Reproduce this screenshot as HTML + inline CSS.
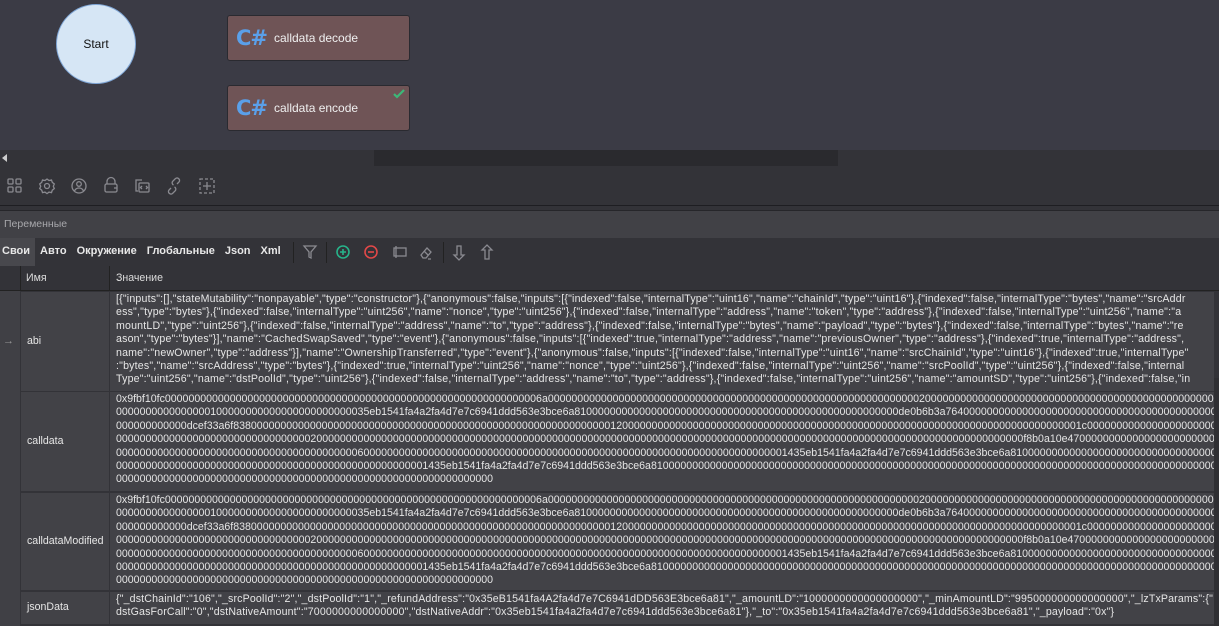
<!DOCTYPE html>
<html><head><meta charset="utf-8"><style>
*{margin:0;padding:0;box-sizing:border-box}
body{width:1219px;height:626px;overflow:hidden;background:#333338;font-family:"Liberation Sans","DejaVu Sans",sans-serif;color:#e0e0e0;position:relative}
.abs{position:absolute}
.canvas{left:0;top:0;width:1219px;height:150px;background:#3b3b45}
.start{left:56px;top:4px;width:80px;height:80px;border-radius:50%;background:#d6e6f5;border:1px solid #7fa6d6;color:#111;font-size:12px;display:flex;align-items:center;justify-content:center}
.node{left:227px;width:183px;height:46px;background:#6f5456;border:1px solid #2a2a30;border-radius:3px;display:flex;align-items:center}
.node b{color:#5aa0ea;font-size:21px;margin-left:8px;width:38px;font-family:"DejaVu Sans",sans-serif;letter-spacing:-1px}
.node span{color:#f0f0f0;font-size:12px;margin-left:0}
.hs{left:0;top:150px;width:1219px;height:16px;background:#333338}
.thumb{left:374px;top:150px;width:464px;height:16px;background:#2a2a2e}
.line{height:1px;background:#1e1e22;left:0;width:1219px}
.var{left:0;top:211px;width:1219px;height:27px;background:#414146;color:#a8a8ac;font-size:10.5px;padding:7px 4px}
.tabs{left:0;top:238px;height:28px;font-size:11px;font-weight:bold;color:#e8e8e8;display:flex}
.tabs div{padding:7px 5px 0 5px;height:28px}
.grid{left:0;top:266px;width:1219px;height:360px;background:#333338}
.hdr{font-size:10.6px;color:#ddd}
.ind{left:0;top:291px;width:20px;height:335px;background:#404045}
.cell{background:#424247;font-size:10.6px;line-height:13.4px;color:#e6e6e6}
.val{overflow:hidden;white-space:nowrap;padding:1px 0 0 6px}
.ls{letter-spacing:0.19px}
.nm{display:flex;align-items:center;padding-left:6px}
svg{position:absolute}
</style></head><body>
<div class="abs canvas"></div>
<div class="abs start">Start</div>
<div class="abs node" style="top:15px"><b>C#</b><span>calldata decode</span></div>
<div class="abs node" style="top:85px"><b>C#</b><span>calldata encode</span><svg style="right:4px;top:3px" width="12" height="10" viewBox="0 0 12 10"><path d="M1 5l3 3 7-7" stroke="#3cb878" stroke-width="2.2" fill="none"/></svg></div>
<div class="abs hs"></div><div class="abs thumb"></div>
<svg style="left:2px;top:154px" width="6" height="8"><path d="M5 0L0 4 5 8z" fill="#ccc"/></svg>
<svg style="left:0;top:166px" width="230" height="40" fill="none" stroke="#8a8a90" stroke-width="1.3">
<rect x="8" y="13" width="5" height="5" rx="1"/><rect x="16" y="13" width="5" height="5" rx="1"/><rect x="8" y="21" width="5" height="5" rx="1"/><rect x="16" y="21" width="5" height="5" rx="1"/>
<circle cx="47" cy="20" r="2.5"/><path d="M47 13l2 1.5 2.5-.5 .8 2.4 2 1.6-1 2.3 1 2.3-2 1.6-.8 2.4-2.5-.5-2 1.5-2-1.5-2.5.5-.8-2.4-2-1.6 1-2.3-1-2.3 2-1.6.8-2.4 2.5.5z"/>
<circle cx="79" cy="20" r="7"/><circle cx="79" cy="18" r="2.3"/><path d="M74.5 25c1-2.5 2.5-3 4.5-3s3.5.5 4.5 3"/>
<path d="M107 18v-2.5a4 4 0 0 1 8 0V18"/><rect x="105" y="18" width="12" height="8" rx="1.5"/><path d="M114 22h3"/>
<path d="M138 25h-2v-11h6"/><rect x="139" y="17" width="10" height="9" rx="1"/><path d="M142 20l-1.5 1.5 1.5 1.5M146 20l1.5 1.5-1.5 1.5"/>
<path d="M171 22l-2 2a2.5 2.5 0 0 0 3.5 3.5l3-3a2.5 2.5 0 0 0-1-3.5M177 18l2-2a2.5 2.5 0 0 0-3.5-3.5l-3 3a2.5 2.5 0 0 0 1 3.5"/>
<rect x="200" y="13" width="14" height="14" stroke-dasharray="3 2"/><path d="M207 16v8M203 20h8"/>
</svg>
<div class="abs line" style="top:205px"></div>
<div class="abs line" style="top:210px;background:#26262a"></div>
<div class="abs var">Переменные</div>
<div class="abs tabs"><div style="background:#48484d;padding-left:2px">Свои</div><div>Авто</div><div>Окружение</div><div>Глобальные</div><div>Json</div><div>Xml</div></div>
<div class="abs" style="left:293px;top:242px;width:1px;height:21px;background:#222"></div>
<div class="abs" style="left:326px;top:242px;width:1px;height:21px;background:#222"></div>
<div class="abs" style="left:443px;top:242px;width:1px;height:21px;background:#222"></div>
<svg style="left:300px;top:238px" width="210" height="28" fill="none" stroke-width="1.3">
<path d="M4 8h12l-5 6v6l-2-1v-5z" stroke="#8a8a90"/>
<circle cx="43" cy="14" r="6" stroke="#27b38a" stroke-width="1.6"/><path d="M40 14h6M43 11v6" stroke="#27b38a" stroke-width="1.6"/>
<circle cx="71" cy="14" r="6" stroke="#e24848" stroke-width="1.6"/><path d="M68 14h6" stroke="#e24848" stroke-width="1.6"/>
<rect x="94" y="10" width="12" height="8" stroke="#8a8a90"/><path d="M96 8v12" stroke="#8a8a90"/>
<path d="M121 17l6-7 4 4-5 6h-3zM124 13l4 4M128 21h3" stroke="#8a8a90"/>
<path d="M157 8v9h-3l5 5 5-5h-3V8z" stroke="#8a8a90"/>
<path d="M185 21v-9h-3l5-5 5 5h-3v9z" stroke="#8a8a90"/>
</svg>
<div class="abs grid"></div>
<div class="abs" style="left:0;top:266px;width:1219px;height:25px;border-bottom:1px solid #222"></div>
<div class="abs" style="left:20px;top:266px;width:1px;height:25px;background:#222"></div>
<div class="abs" style="left:109px;top:266px;width:1px;height:25px;background:#222"></div>
<div class="abs hdr" style="left:26px;top:272px">Имя</div>
<div class="abs hdr" style="left:116px;top:272px">Значение</div>
<div class="abs ind"></div>
<div class="abs" style="left:3px;top:335px;color:#999;font-size:11px">→</div>

<div class="abs cell nm" style="left:21px;top:292px;width:88px;height:99px">abi</div>
<div class="abs cell val ls" style="left:110px;top:292px;width:1104px;height:99px">
<div>[{"inputs":[],"stateMutability":"nonpayable","type":"constructor"},{"anonymous":false,"inputs":[{"indexed":false,"internalType":"uint16","name":"chainId","type":"uint16"},{"indexed":false,"internalType":"bytes","name":"srcAddr</div>
<div>ess","type":"bytes"},{"indexed":false,"internalType":"uint256","name":"nonce","type":"uint256"},{"indexed":false,"internalType":"address","name":"token","type":"address"},{"indexed":false,"internalType":"uint256","name":"a</div>
<div>mountLD","type":"uint256"},{"indexed":false,"internalType":"address","name":"to","type":"address"},{"indexed":false,"internalType":"bytes","name":"payload","type":"bytes"},{"indexed":false,"internalType":"bytes","name":"re</div>
<div>ason","type":"bytes"}],"name":"CachedSwapSaved","type":"event"},{"anonymous":false,"inputs":[{"indexed":true,"internalType":"address","name":"previousOwner","type":"address"},{"indexed":true,"internalType":"address",</div>
<div>name":"newOwner","type":"address"}],"name":"OwnershipTransferred","type":"event"},{"anonymous":false,"inputs":[{"indexed":false,"internalType":"uint16","name":"srcChainId","type":"uint16"},{"indexed":true,"internalType"</div>
<div>:"bytes","name":"srcAddress","type":"bytes"},{"indexed":true,"internalType":"uint256","name":"nonce","type":"uint256"},{"indexed":false,"internalType":"uint256","name":"srcPoolId","type":"uint256"},{"indexed":false,"internal</div>
<div>Type":"uint256","name":"dstPoolId","type":"uint256"},{"indexed":false,"internalType":"address","name":"to","type":"address"},{"indexed":false,"internalType":"uint256","name":"amountSD","type":"uint256"},{"indexed":false,"in</div>
</div>

<div class="abs cell nm" style="left:21px;top:392px;width:88px;height:99px">calldata</div>
<div class="abs cell val" style="left:110px;top:392px;width:1104px;height:99px">
<div>0x9fbf10fc0000000000000000000000000000000000000000000000000000000000000006a000000000000000000000000000000000000000000000000000000000000000200000000000000000000000000000000000000000000000000000000000000000000</div>
<div>0000000000000000100000000000000000000000035eb1541fa4a2fa4d7e7c6941ddd563e3bce6a8100000000000000000000000000000000000000000000000000000de0b6b3a76400000000000000000000000000000000000000000000000000000000</div>
<div>000000000000dcef33a6f838000000000000000000000000000000000000000000000000000000000000012000000000000000000000000000000000000000000000000000000000000000000000000000001c00000000000000000000000000000000000</div>
<div>0000000000000000000000000000000002000000000000000000000000000000000000000000000000000000000000000000000000000000000000000000000000000000000000000000000000f8b0a10e47000000000000000000000000000000000000</div>
<div>000000000000000000000000000000000000000006000000000000000000000000000000000000000000000000000000000000000000000001435eb1541fa4a2fa4d7e7c6941ddd563e3bce6a8100000000000000000000000000000000000000000000</div>
<div>00000000000000000000000000000000000000000000000000001435eb1541fa4a2fa4d7e7c6941ddd563e3bce6a810000000000000000000000000000000000000000000000000000000000000000000000000000000000000000000000000000000000</div>
<div>0000000000000000000000000000000000000000000000000000000000000000</div>
</div>

<div class="abs cell nm" style="left:21px;top:493px;width:88px;height:97px">calldataModified</div>
<div class="abs cell val" style="left:110px;top:493px;width:1104px;height:97px">
<div>0x9fbf10fc0000000000000000000000000000000000000000000000000000000000000006a000000000000000000000000000000000000000000000000000000000000000200000000000000000000000000000000000000000000000000000000000000000000</div>
<div>0000000000000000100000000000000000000000035eb1541fa4a2fa4d7e7c6941ddd563e3bce6a8100000000000000000000000000000000000000000000000000000de0b6b3a76400000000000000000000000000000000000000000000000000000000</div>
<div>000000000000dcef33a6f838000000000000000000000000000000000000000000000000000000000000012000000000000000000000000000000000000000000000000000000000000000000000000000001c00000000000000000000000000000000000</div>
<div>0000000000000000000000000000000002000000000000000000000000000000000000000000000000000000000000000000000000000000000000000000000000000000000000000000000000f8b0a10e47000000000000000000000000000000000000</div>
<div>000000000000000000000000000000000000000006000000000000000000000000000000000000000000000000000000000000000000000001435eb1541fa4a2fa4d7e7c6941ddd563e3bce6a8100000000000000000000000000000000000000000000</div>
<div>00000000000000000000000000000000000000000000000000001435eb1541fa4a2fa4d7e7c6941ddd563e3bce6a810000000000000000000000000000000000000000000000000000000000000000000000000000000000000000000000000000000000</div>
<div>0000000000000000000000000000000000000000000000000000000000000000</div>
</div>

<div class="abs cell nm" style="left:21px;top:592px;width:88px;height:32px">jsonData</div>
<div class="abs cell val" style="left:110px;top:592px;width:1104px;height:32px;letter-spacing:0.16px">
<div>{"_dstChainId":"106","_srcPoolId":"2","_dstPoolId":"1","_refundAddress":"0x35eB1541fa4A2fa4d7e7C6941dDD563E3bce6a81","_amountLD":"1000000000000000000","_minAmountLD":"995000000000000000","_lzTxParams":{"</div>
<div>dstGasForCall":"0","dstNativeAmount":"7000000000000000","dstNativeAddr":"0x35eb1541fa4a2fa4d7e7c6941ddd563e3bce6a81"},"_to":"0x35eb1541fa4a2fa4d7e7c6941ddd563e3bce6a81","_payload":"0x"}</div>
</div>
<div class="abs" style="left:1214px;top:378px;width:5px;height:248px;background:#2f2f33"></div>
</body></html>
